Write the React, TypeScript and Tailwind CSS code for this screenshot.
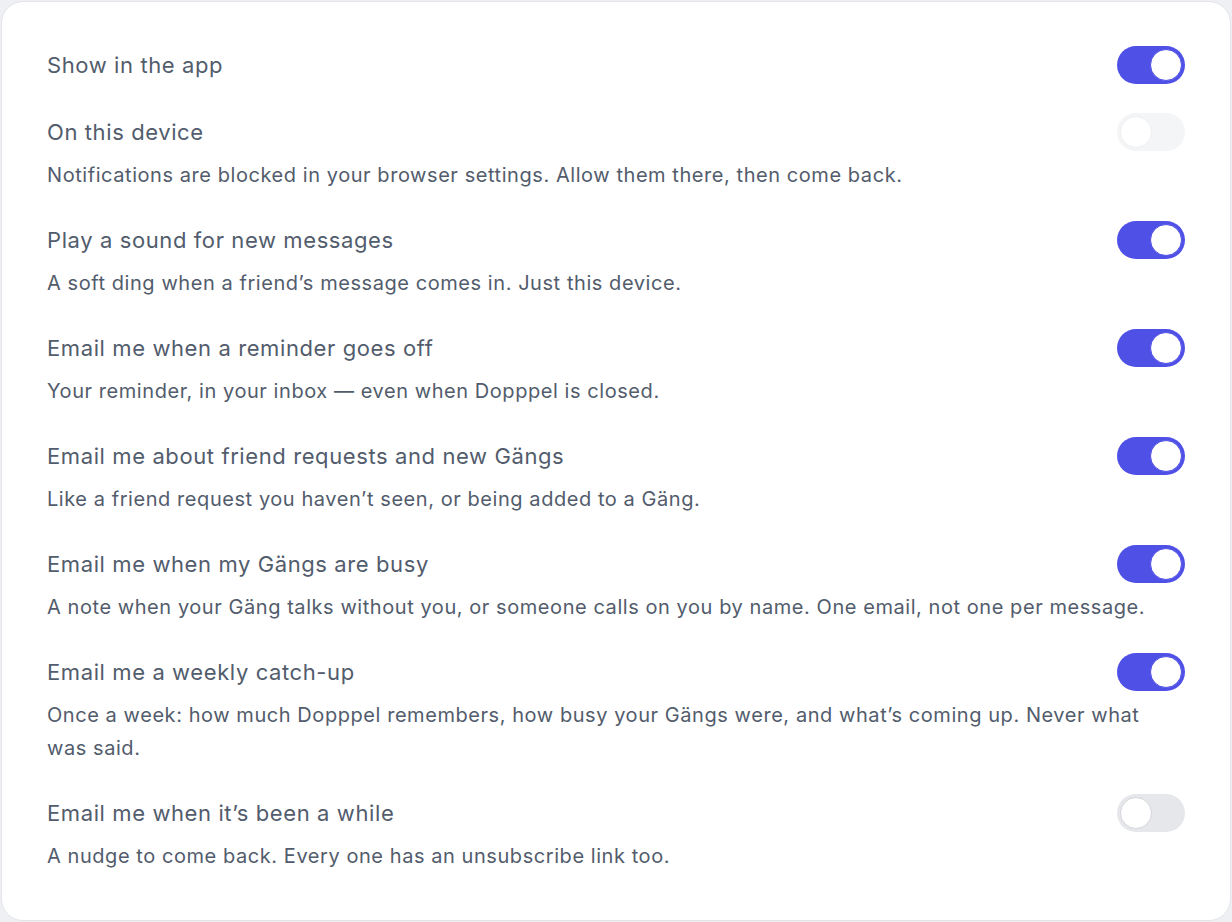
import React, { useState } from 'react';

interface SettingRow {
  id: string;
  title: string;
  description?: string;
  enabled: boolean;
  disabled?: boolean;
}

const initialRows: SettingRow[] = [
  { id: 'in-app', title: 'Show in the app', enabled: true },
  {
    id: 'device',
    title: 'On this device',
    description: 'Notifications are blocked in your browser settings. Allow them there, then come back.',
    enabled: false,
    disabled: true,
  },
  {
    id: 'sound',
    title: 'Play a sound for new messages',
    description: 'A soft ding when a friend’s message comes in. Just this device.',
    enabled: true,
  },
  {
    id: 'reminder',
    title: 'Email me when a reminder goes off',
    description: 'Your reminder, in your inbox — even when Dopppel is closed.',
    enabled: true,
  },
  {
    id: 'friends',
    title: 'Email me about friend requests and new Gängs',
    description: 'Like a friend request you haven’t seen, or being added to a Gäng.',
    enabled: true,
  },
  {
    id: 'busy',
    title: 'Email me when my Gängs are busy',
    description: 'A note when your Gäng talks without you, or someone calls on you by name. One email, not one per message.',
    enabled: true,
  },
  {
    id: 'weekly',
    title: 'Email me a weekly catch-up',
    description: 'Once a week: how much Dopppel remembers, how busy your Gängs were, and what’s coming up. Never what was said.',
    enabled: true,
  },
  {
    id: 'while',
    title: 'Email me when it’s been a while',
    description: 'A nudge to come back. Every one has an unsubscribe link too.',
    enabled: false,
  },
];

const Toggle: React.FC<{ checked: boolean; disabled?: boolean; onChange: () => void }> = ({
  checked,
  disabled = false,
  onChange,
}) => (
  <button
    type="button"
    role="switch"
    aria-checked={checked}
    disabled={disabled}
    onClick={onChange}
    className={`
      relative flex h-[38px] w-[68px] shrink-0 items-center rounded-full p-[3px] transition-colors
      ${checked ? 'bg-[#4f50e6] justify-end' : 'bg-[#e5e7eb] justify-start'}
      ${disabled ? 'opacity-40 cursor-not-allowed' : 'cursor-pointer'}
    `}
  >
    <span
      className={`block h-[32px] w-[32px] rounded-full bg-white border ${
        checked ? 'border-[#4f50e6]' : 'border-[#d4d6dc]'
      }`}
    />
  </button>
);

export default function App() {
  const [rows, setRows] = useState(initialRows);

  const toggle = (id: string) =>
    setRows((prev) => prev.map((r) => (r.id === id ? { ...r, enabled: !r.enabled } : r)));

  return (
    <div
      className="min-h-screen bg-[#eef0f3] p-[1px]"
      style={{ fontFamily: 'Inter, "Noto Sans", sans-serif' }}
    >
      <div className="flex h-[920px] flex-col gap-[29px] rounded-[22px] border border-[#e3e5ea] bg-white px-[45px] py-[44px]">
        {rows.map((row) => (
          <div key={row.id}>
            <div className="flex h-[38px] items-center justify-between">
              <div className="text-[22px] tracking-[0.6px] text-[#525c6c]">{row.title}</div>
              <Toggle checked={row.enabled} disabled={row.disabled} onChange={() => toggle(row.id)} />
            </div>
            {row.description && (
              <p className="mt-[8px] text-[20px] leading-[33px] tracking-[0.56px] text-[#525c6c]">
                {row.description}
              </p>
            )}
          </div>
        ))}
      </div>
    </div>
  );
}
